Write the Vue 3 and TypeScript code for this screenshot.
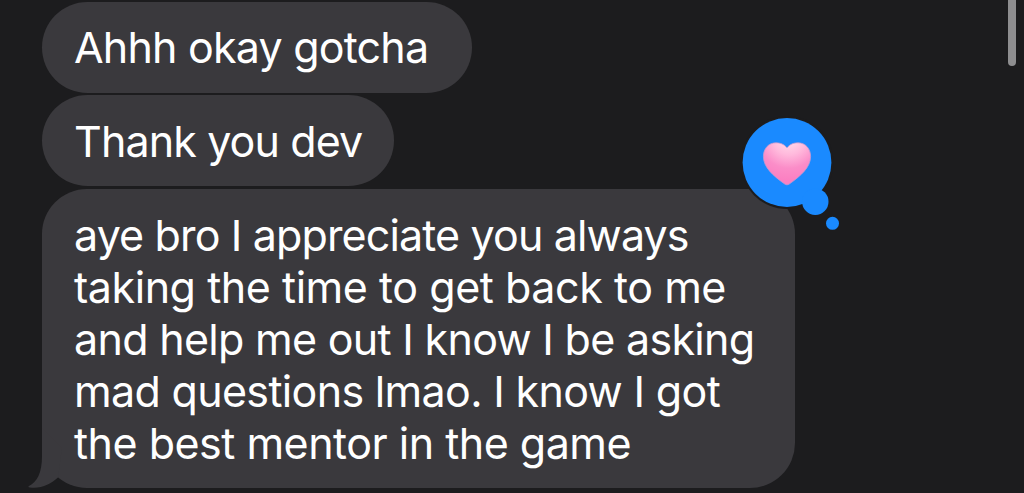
<script setup lang="ts">
interface Message {
  id: number
  lines: string[]
  loved?: boolean
  tail?: boolean
}

const messages: Message[] = [
  { id: 1, lines: ['Ahhh okay gotcha'] },
  { id: 2, lines: ['Thank you dev'] },
  {
    id: 3,
    lines: [
      'aye bro I appreciate you always',
      'taking the time to get back to me',
      'and help me out I know I be asking',
      'mad questions lmao. I know I got',
      'the best mentor in the game',
    ],
    loved: true,
    tail: true,
  },
]
</script>

<template>
  <main class="chat">
    <div v-for="message in messages" :key="message.id" class="bubble" :class="`bubble-${message.id}`">
      <svg v-if="message.tail" class="tail" viewBox="0 0 60 60" aria-hidden="true">
        <path d="M14 0V28C14 45 9 54 1 58Q-0.5 59 2 59.5C13 61 23 56 30 49.5L34 20Z" />
      </svg>
      <p v-for="(line, idx) in message.lines" :key="idx" class="line" :class="`line-${idx + 1}`">
        {{ line }}
      </p>
      <svg v-if="message.loved" class="tapback" viewBox="0 0 104 118" aria-label="Loved">
        <defs>
          <radialGradient id="heart-fill" gradientUnits="userSpaceOnUse" cx="49" cy="24" r="42">
            <stop offset="0" stop-color="#ffe3ee" />
            <stop offset="0.4" stop-color="#ffb9dc" />
            <stop offset="0.72" stop-color="#fb8dc8" />
            <stop offset="1" stop-color="#fb80c2" />
          </radialGradient>
        </defs>
        <circle class="ring" cx="47" cy="48.5" r="46.5" />
        <g class="cloud">
          <circle cx="47" cy="48.5" r="44.4" />
          <circle cx="75.3" cy="87.7" r="13.2" />
          <circle cx="92.5" cy="109.3" r="6.5" />
        </g>
        <path
          class="heart"
          d="M47 33.8C43.8 30 40 28.8 36 28.8C28.5 28.8 23.4 34.7 23.4 42.5C23.4 53.5 33.5 62 44.8 70.1Q47 71.6 49.2 70.1C60.5 62 70.6 53.5 70.6 42.5C70.6 34.7 65.5 28.8 58 28.8C54 28.8 50.2 30 47 33.8Z"
        />
      </svg>
    </div>
    <div class="scrollbar"></div>
  </main>
</template>

<style>
body {
  margin: 0;
  background: #1c1c1e;
}
</style>

<style scoped>
.chat {
  position: relative;
  box-sizing: border-box;
  width: 1024px;
  height: 493px;
  padding: 1.5px 0 0 42px;
  display: flex;
  flex-direction: column;
  align-items: flex-start;
  gap: 2.7px;
  overflow: hidden;
  background: #1c1c1e;
  color: #fff;
  font-family: Inter, 'Liberation Sans', sans-serif;
  font-size: 43px;
  line-height: 52px;
}
.bubble {
  position: relative;
  box-sizing: border-box;
  flex: none;
  padding: 19.8px 32px 0;
  height: 91px;
  border-radius: 45.5px;
  background: #3a393d;
}
.bubble-1 {
  width: 430px;
  letter-spacing: -0.8px;
}
.bubble-2 {
  width: 352px;
  letter-spacing: -0.88px;
}
.bubble-3 {
  width: 753px;
  height: 299.6px;
  border-radius: 45px;
}
.line {
  margin: 0;
  white-space: nowrap;
}
.bubble-3 .line-1 {
  letter-spacing: -0.86px;
}
.bubble-3 .line-2 {
  letter-spacing: -0.45px;
}
.bubble-3 .line-3 {
  letter-spacing: -0.7px;
}
.bubble-3 .line-4 {
  letter-spacing: -0.67px;
}
.bubble-3 .line-5 {
  letter-spacing: -0.5px;
}
.tail {
  position: absolute;
  left: -14px;
  bottom: 0;
  width: 60px;
  height: 60px;
  fill: #3a393d;
}
.tapback {
  position: absolute;
  top: -75px;
  left: 698px;
  width: 104px;
  height: 118px;
}
.ring {
  fill: #1c1c1e;
}
.cloud {
  fill: #1a8aff;
}
.heart {
  fill: url(#heart-fill);
  stroke: #c29bd0;
  stroke-width: 0.8;
}
.scrollbar {
  position: absolute;
  top: -10px;
  left: 1008px;
  width: 8px;
  height: 76px;
  border-radius: 4px;
  background: #8e8e90;
}
</style>
